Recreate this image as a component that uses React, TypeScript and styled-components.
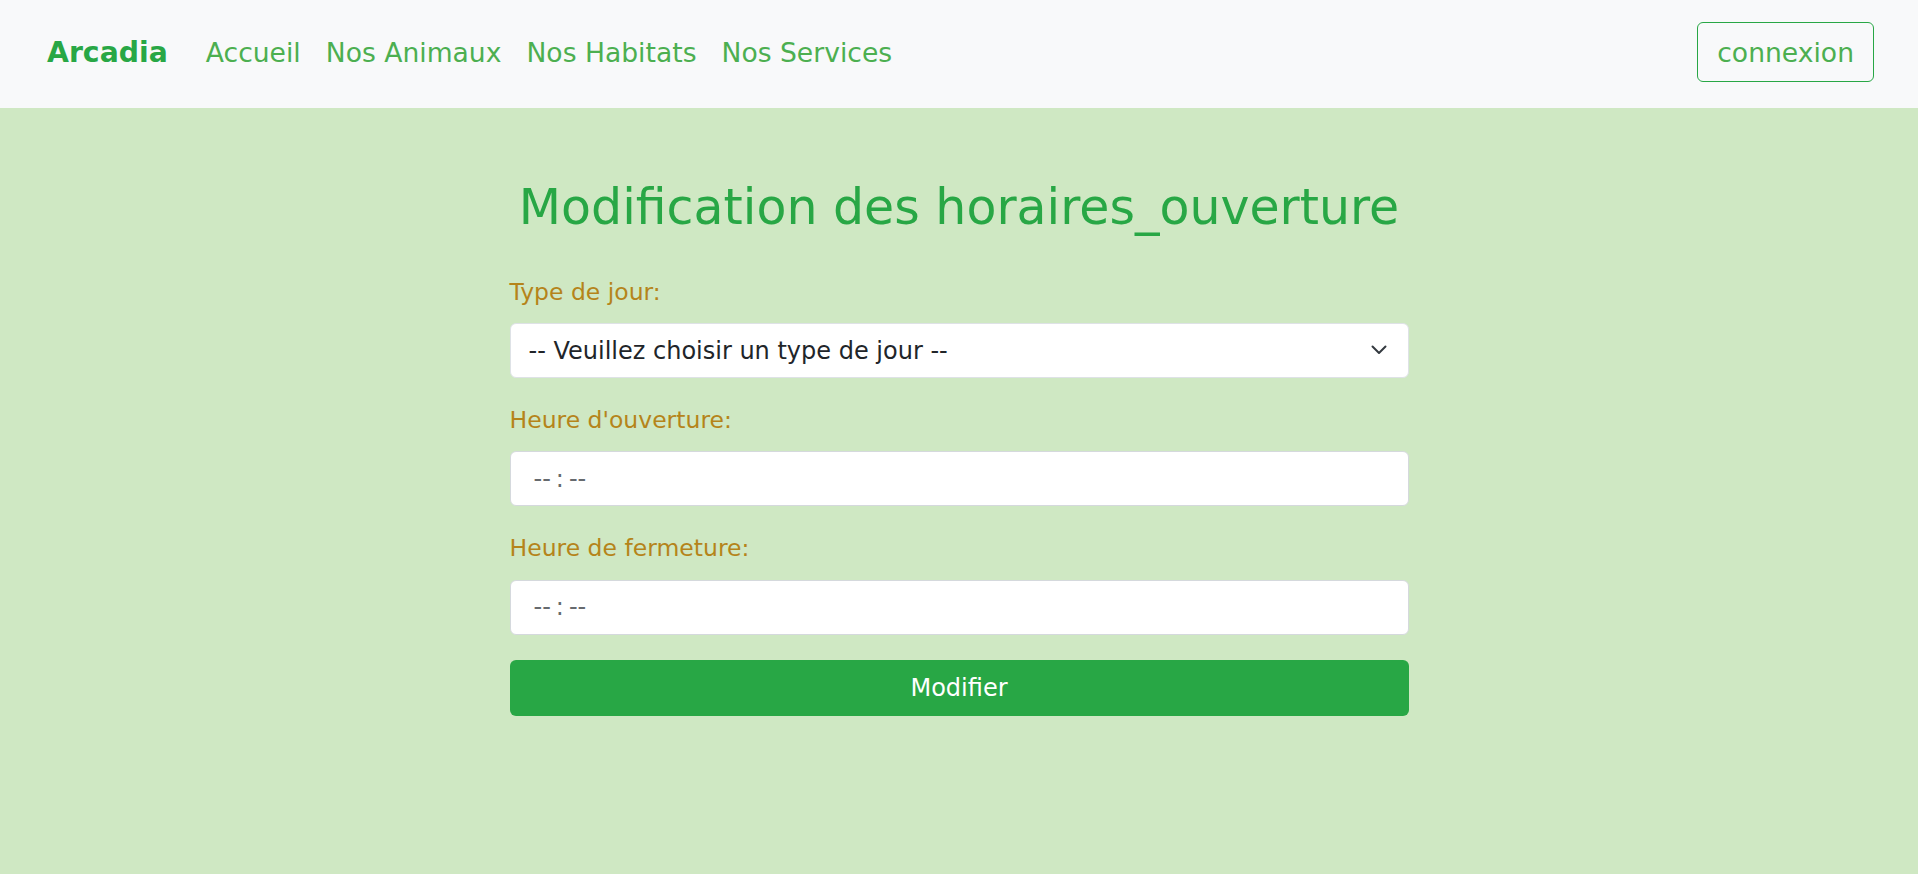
import React from 'react';
import styled, { createGlobalStyle } from 'styled-components';

const GlobalStyle = createGlobalStyle`
    html,
    body {
        margin: 0;
        padding: 0;
        height: 100%;
    }

    body {
        font-family: 'DejaVu Sans', 'Liberation Sans', sans-serif;
        background-color: #cfe8c3;
    }

    #root {
        min-height: 100vh;
        display: flex;
        flex-direction: column;
    }

    * {
        box-sizing: border-box;
    }
`;

const Header = styled.header`
    height: 108px;
    padding: 22px 44px 26px 47px;
    display: flex;
    align-items: center;
    background-color: #f8f9fa;
`;

const Brand = styled.a`
    font-size: 28.3px;
    font-weight: 700;
    color: #28a745;
    text-decoration: none;
    margin-right: 38px;
`;

const NavList = styled.nav`
    display: flex;
    align-items: center;
    gap: 25px;
    flex: 1;
`;

const NavLink = styled.a`
    font-size: 26.6px;
    color: #4caf50;
    text-decoration: none;
`;

const LoginButton = styled.button`
    height: 60px;
    padding: 0 19px;
    font-family: inherit;
    font-size: 26.6px;
    color: #4caf50;
    background: transparent;
    border: 1px solid #28a745;
    border-radius: 6px;
    cursor: pointer;
`;

const Main = styled.main`
    flex: 1;
    padding-top: 71px;
    background-color: #cfe8c3;
`;

const FormWrap = styled.section`
    width: 899px;
    margin: 0 auto;
`;

const Title = styled.h1`
    margin: 0 0 37px;
    font-size: 49px;
    font-weight: 400;
    line-height: 1.2;
    text-align: center;
    color: #28a745;
`;

const Group = styled.div`
    margin-bottom: 25px;
`;

const Label = styled.label`
    display: block;
    margin-bottom: 13px;
    font-size: 23.5px;
    line-height: 1.5;
    color: #b5841a;
`;

const SelectBox = styled.div`
    position: relative;
`;

const Select = styled.select`
    width: 100%;
    height: 55px;
    padding: 0 60px 0 18px;
    font-family: inherit;
    font-size: 24px;
    color: #212529;
    background-color: #fff;
    border: 1px solid #dee2e6;
    border-radius: 6px;
    appearance: none;
    outline: none;
`;

const Chevron = styled.svg`
    position: absolute;
    right: 22px;
    top: 22px;
    width: 16px;
    height: 10px;
    pointer-events: none;
`;

const TimeInput = styled.input`
    width: 100%;
    height: 55px;
    padding: 0 20px;
    font-family: inherit;
    font-size: 24px;
    color: #666a6e;
    background-color: #fff;
    border: 1px solid #d5d9dd;
    border-radius: 6px;
    outline: none;

    &::-webkit-calendar-picker-indicator {
        display: none;
    }

    &::-webkit-datetime-edit-ampm-field {
        display: none;
    }

    &::-webkit-datetime-edit-hour-field,
    &::-webkit-datetime-edit-minute-field {
        padding: 0 3px;
    }

    &::-webkit-datetime-edit-text {
        padding: 0 2px;
    }

    &::-webkit-datetime-edit-text:last-of-type {
        padding: 0;
    }
`;

const SubmitButton = styled.button`
    width: 100%;
    height: 56px;
    font-family: inherit;
    font-size: 24px;
    color: #fff;
    background-color: #28a745;
    border: none;
    border-radius: 6px;
    cursor: pointer;
`;

const App = () => {
    return (
        <>
            <GlobalStyle />
            <Header>
                <Brand href="#">Arcadia</Brand>
                <NavList>
                    <NavLink href="#">Accueil</NavLink>
                    <NavLink href="#">Nos Animaux</NavLink>
                    <NavLink href="#">Nos Habitats</NavLink>
                    <NavLink href="#">Nos Services</NavLink>
                </NavList>
                <LoginButton type="button">connexion</LoginButton>
            </Header>
            <Main>
                <FormWrap>
                    <Title>Modification des horaires_ouverture</Title>
                    <form onSubmit={(e) => e.preventDefault()}>
                        <Group>
                            <Label htmlFor="type_jour">Type de jour:</Label>
                            <SelectBox>
                                <Select id="type_jour" defaultValue="">
                                    <option value="">-- Veuillez choisir un type de jour --</option>
                                    <option value="semaine">Semaine</option>
                                    <option value="weekend">Week-end</option>
                                    <option value="ferie">Jour férié</option>
                                </Select>
                                <Chevron viewBox="0 0 16 10" fill="none">
                                    <path
                                        d="M1.5 1.5L8 8L14.5 1.5"
                                        stroke="#343a40"
                                        strokeWidth="2"
                                        strokeLinecap="round"
                                        strokeLinejoin="round"
                                    />
                                </Chevron>
                            </SelectBox>
                        </Group>
                        <Group>
                            <Label htmlFor="heure_ouverture">Heure d'ouverture:</Label>
                            <TimeInput id="heure_ouverture" type="time" />
                        </Group>
                        <Group>
                            <Label htmlFor="heure_fermeture">Heure de fermeture:</Label>
                            <TimeInput id="heure_fermeture" type="time" />
                        </Group>
                        <SubmitButton type="submit">Modifier</SubmitButton>
                    </form>
                </FormWrap>
            </Main>
        </>
    );
};

export default App;
